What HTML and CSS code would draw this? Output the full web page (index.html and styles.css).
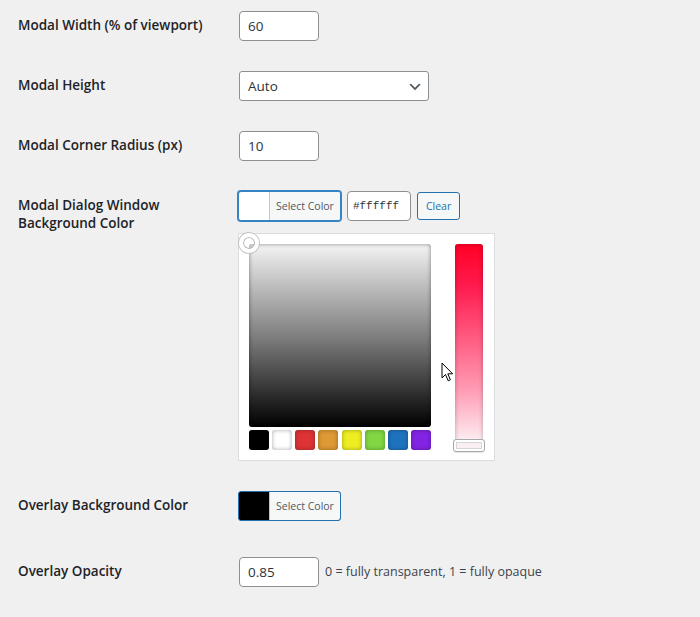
FILE: index.html
```html
<!DOCTYPE html>
<html lang="en">
<head>
<meta charset="utf-8">
<title>Modal settings</title>
<link rel="stylesheet" href="styles.css">
</head>
<body>
<div class="wrap">
  <table class="form-table">
    <tr>
      <th>Modal Width (% of viewport)</th>
      <td><div class="text-input">60</div></td>
    </tr>
    <tr>
      <th>Modal Height</th>
      <td>
        <div class="select">
          <span>Auto</span>
          <svg class="chev" width="16" height="16" viewBox="0 0 20 20"><path d="M5 6l5 5 5-5 2 1-7 7-7-7 2-1z" fill="#50575e"/></svg>
        </div>
      </td>
    </tr>
    <tr>
      <th>Modal Corner Radius (px)</th>
      <td><div class="text-input">10</div></td>
    </tr>
    <tr>
      <th>Modal Dialog Window<br>Background Color</th>
      <td>
        <div class="picker-top">
          <div class="color-result focused swatch-white"><span class="result-text">Select Color</span></div>
          <div class="hex-input">#ffffff</div>
          <div class="btn-clear">Clear</div>
        </div>
        <div class="iris">
          <div class="iris-left">
            <div class="iris-square">
              <span class="square-handle"></span>
            </div>
            <div class="palette">
              <span class="pal" style="background:#000000"></span>
              <span class="pal" style="background:#ffffff"></span>
              <span class="pal" style="background:#dd3333"></span>
              <span class="pal" style="background:#dd9933"></span>
              <span class="pal" style="background:#eeee22"></span>
              <span class="pal" style="background:#81d742"></span>
              <span class="pal" style="background:#1e73be"></span>
              <span class="pal" style="background:#8224e3"></span>
            </div>
          </div>
          <div class="iris-strip">
            <span class="strip-handle"></span>
          </div>
          <svg class="cursor" width="14" height="21" viewBox="0 0 14 21"><path d="M1 1 L1 16 L4.5 12.5 L7.2 18.8 L9.4 17.8 L6.8 11.8 L11.6 11.8 Z" fill="#fff" stroke="#000" stroke-width="1" stroke-linejoin="round"/></svg>
        </div>
      </td>
    </tr>
    <tr>
      <th>Overlay Background Color</th>
      <td>
        <div class="color-result swatch-black"><span class="result-text">Select Color</span></div>
      </td>
    </tr>
    <tr>
      <th>Overlay Opacity</th>
      <td>
        <div class="inline-row">
          <div class="text-input">0.85</div>
          <span class="description">0 = fully transparent, 1 = fully opaque</span>
        </div>
      </td>
    </tr>
  </table>
</div>
</body>
</html>
```
FILE: styles.css
```css
html, body {
  margin: 0;
  padding: 0;
  background: #f0f0f1;
}
body {
  font-family: "Open Sans", "Noto Sans", sans-serif;
  color: #1d2327;
  font-size: 14px;
}
.wrap {
  padding-left: 18px;
  margin-top: -4px;
}
.form-table {
  border-collapse: collapse;
}
.form-table th {
  width: 200px;
  padding: 20px 10px 20px 0;
  text-align: left;
  vertical-align: top;
  font-weight: 600;
  font-size: 13.5px;
  line-height: 18.2px;
  color: #1d2327;
}
.form-table td {
  padding: 15px 10px;
  vertical-align: top;
  line-height: 1.3;
}
.text-input {
  box-sizing: border-box;
  width: 80px;
  height: 30px;
  margin: 0 1px;
  padding: 0 8px;
  border: 1px solid #8c8f94;
  border-radius: 4px;
  background: #fff;
  color: #2c3338;
  font-size: 13.5px;
  line-height: 28px;
}
.select {
  box-sizing: border-box;
  width: 190px;
  height: 30px;
  margin: 0 1px;
  padding: 0 5px 0 8px;
  border: 1px solid #8c8f94;
  border-radius: 3px;
  background: #fff;
  color: #2c3338;
  font-size: 13.5px;
  line-height: 28px;
  display: flex;
  align-items: center;
  justify-content: space-between;
}
.chev {
  margin-top: 2px;
}
.picker-top {
  display: flex;
  align-items: flex-start;
}
.color-result {
  box-sizing: border-box;
  width: max-content;
  height: 30px;
  padding-left: 30px;
  margin: 0 6px 6px 0;
  border: 1px solid #2271b1;
  border-radius: 3px;
  display: flex;
}
.color-result.focused {
  border-color: #3582c4;
  box-shadow: 0 0 0 1px #3582c4;
}
.swatch-white { background: #ffffff; }
.swatch-black { background: #000000; }
.result-text {
  background: #f6f7f7;
  border-left: 1px solid #c3c4c7;
  border-radius: 0 2px 2px 0;
  color: #50575e;
  padding: 0 6px;
  font-size: 10.5px;
  line-height: 28px;
}
.hex-input {
  box-sizing: border-box;
  width: 64px;
  height: 30px;
  padding: 0 5px;
  border: 1px solid #8c8f94;
  border-radius: 4px;
  background: #fff;
  color: #2c3338;
  font-family: "Liberation Mono", "DejaVu Sans Mono", monospace;
  font-size: 11px;
  line-height: 28px;
}
.btn-clear {
  box-sizing: border-box;
  height: 28px;
  margin: 1px 0 0 6px;
  padding: 0 8px;
  border: 1px solid #2271b1;
  border-radius: 3px;
  background: #f6f7f7;
  color: #2271b1;
  font-size: 10.5px;
  line-height: 26px;
}
.iris {
  position: relative;
  box-sizing: border-box;
  width: 257px;
  height: 228px;
  margin-top: 6px;
  padding: 10px 11px 0 10px;
  background: #fff;
  border: 1px solid #dcdcde;
  display: flex;
  align-items: flex-start;
}
.iris-left {
  width: 182px;
  display: flex;
  flex-direction: column;
  gap: 3px;
}
.iris-square {
  position: relative;
  height: 183px;
  border-radius: 3px;
  background: linear-gradient(to bottom, #f4f4f4 0%, #b9b9b9 25%, #808080 50%, #404040 75%, #000 100%);
  box-shadow: inset 0 0 4px rgba(0, 0, 0, 0.45);
}
.square-handle {
  position: absolute;
  left: -10px;
  top: -11px;
  box-sizing: border-box;
  width: 20px;
  height: 20px;
  border-radius: 50%;
  border: 4px solid rgba(255, 255, 255, 0.9);
  box-shadow: 0 0 0 1px #c3c4c7, inset 0 0 0 1px #b0b0b0;
}
.palette {
  display: flex;
  justify-content: space-between;
}
.pal {
  width: 20px;
  height: 20px;
  border-radius: 3px;
  box-shadow: inset 0 0 4px rgba(0, 0, 0, 0.35);
}
.iris-strip {
  position: relative;
  margin-left: 24px;
  width: 28px;
  height: 207px;
  border-radius: 3px;
  background: linear-gradient(to bottom, #ff0025 0%, #ff1a4d 20%, #ff5a80 45%, #ff9ab3 70%, #fde3ea 92%, #fff 100%);
  box-shadow: inset 0 0 4px rgba(0, 0, 0, 0.3);
}
.strip-handle {
  position: absolute;
  left: -2px;
  right: -2px;
  bottom: -1px;
  height: 13px;
  box-sizing: border-box;
  border: 1px solid #a7aaad;
  border-radius: 3px;
  background: rgba(250, 240, 243, 0.9);
  box-shadow: inset 0 0 0 2px #fff, inset 0 0 0 3px #d5d5d5, 0 1px 1px rgba(0, 0, 0, 0.1);
}
.cursor {
  position: absolute;
  left: 202px;
  top: 128px;
}
.inline-row {
  display: flex;
  align-items: center;
  gap: 5px;
}
.description {
  color: #3c434a;
  font-size: 12.5px;
}
```
